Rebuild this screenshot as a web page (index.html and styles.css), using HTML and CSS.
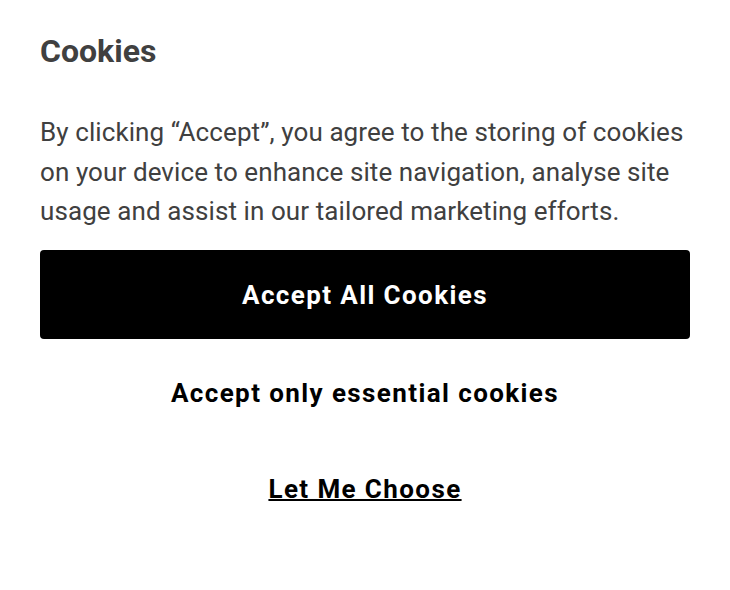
FILE: index.html
```html
<!DOCTYPE html>
<html lang="en">
<head>
<meta charset="utf-8">
<title>Cookies</title>
<link rel="stylesheet" href="styles.css">
</head>
<body>
<div class="banner">
  <h2 class="title">Cookies</h2>
  <p class="desc">By clicking “Accept”, you agree to the storing of cookies on your device to enhance site navigation, analyse site usage and assist in our tailored marketing efforts.</p>
  <div class="actions">
    <button class="btn btn-primary">Accept All Cookies</button>
    <button class="btn btn-plain">Accept only essential cookies</button>
    <button class="btn btn-link">Let Me Choose</button>
  </div>
</div>
</body>
</html>
```

FILE: styles.css
```css
html, body {
  margin: 0;
  padding: 0;
  background: #fff;
}
body {
  font-family: Roboto, "Liberation Sans", Arial, sans-serif;
}
.banner {
  padding: 32px 40px 40px;
  width: 650px;
}
.title {
  margin: 0;
  font-size: 32px;
  line-height: 38.4px;
  font-weight: 700;
  color: #404040;
}
.desc {
  margin: 43px 0 0;
  font-size: 26px;
  line-height: 39.2px;
  letter-spacing: 0.09px;
  color: #404040;
}
.actions {
  display: flex;
  flex-direction: column;
  margin-top: 19px;
}
.btn {
  font-family: Roboto, "Liberation Sans", Arial, sans-serif;
  font-size: 26px;
  font-weight: 700;
  letter-spacing: 1.4px;
  border: 0;
  background: none;
  color: #000;
  padding: 0;
  cursor: pointer;
}
.btn-primary {
  height: 89px;
  background: #000;
  color: #fff;
  border-radius: 4px;
}
.btn-plain {
  height: 56px;
  margin-top: 26px;
}
.btn-link {
  height: 56px;
  margin-top: 40px;
  text-decoration: underline;
  text-underline-offset: 1px;
  text-decoration-thickness: 2px;
}
```
